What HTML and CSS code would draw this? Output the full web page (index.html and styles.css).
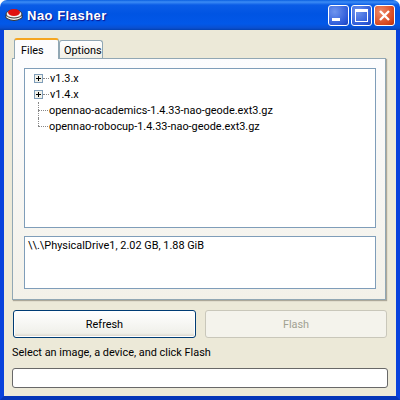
FILE: index.html
```html
<!DOCTYPE html>
<html>
<head>
  <title>Nao Flasher</title>
  <link rel="stylesheet" href="styles.css">
</head>
<body>
  <div class="window">
    <div class="titlebar">
      <svg class="appIcon" width="18" height="16" viewBox="0 0 18 16">
        <path d="M1 8 L1 11 Q9 16 17 11 L17 8 Z" fill="#f4f4f4" stroke="#333" stroke-width="1"/>
        <ellipse cx="9" cy="7" rx="8" ry="4" fill="#f4f4f4" stroke="#333" stroke-width="1"/>
        <ellipse cx="9" cy="5.5" rx="6" ry="3.5" fill="#e01010"/>
      </svg>
      <span class="title">Nao Flasher</span>
      <div class="winButtons">
        <div class="winBtn"><span class="minGlyph"></span></div>
        <div class="winBtn"><span class="maxGlyph"></span></div>
        <div class="winBtn closeBtn">
          <svg width="13" height="13" viewBox="0 0 13 13"><path d="M2 2 L11 11 M11 2 L2 11" stroke="#fff" stroke-width="2.4"/></svg>
        </div>
      </div>
    </div>
    <div class="content">
      <div class="tabs">
        <div class="tab activeTab">Files</div>
        <div class="tab">Options</div>
      </div>
      <div class="panel">
        <div class="tree">
          <div class="row"><span class="expander"></span><span class="dash"></span>v1.3.x</div>
          <div class="row"><span class="expander"></span><span class="dash"></span>v1.4.x</div>
          <div class="row leaf"><span class="dash longDash"></span>opennao-academics-1.4.33-nao-geode.ext3.gz</div>
          <div class="row leaf lastLeaf"><span class="dash longDash"></span>opennao-robocup-1.4.33-nao-geode.ext3.gz</div>
        </div>
        <div class="devices">\\.\PhysicalDrive1, 2.02 GB, 1.88 GiB</div>
      </div>
      <div class="actions">
        <button class="btn refresh">Refresh</button>
        <button class="btn" disabled>Flash</button>
      </div>
      <p class="status">Select an image, a device, and click Flash</p>
      <div class="progress"></div>
    </div>
  </div>
</body>
</html>
```
FILE: styles.css
```css
*{
  box-sizing: border-box;
  padding: 0;
  margin: 0;
}

body{
  width: 400px;
  height: 400px;
  overflow: hidden;
  font-family: Roboto, "Liberation Sans", Arial, sans-serif;
  font-size: 10.9px;
  color: #000;
}

.window{
  width: 400px;
  height: 400px;
  display: flex;
  flex-direction: column;
  border-radius: 7px 7px 0 0;
  background-color: #fff;
}

.titlebar{
  height: 30px;
  display: flex;
  align-items: center;
  padding: 0 5px 0 5px;
  border-radius: 7px 7px 0 0;
  background: linear-gradient(to bottom, #0a5fe0 0, #3c8cf5 2px, #0a5ce6 5px, #0054e3 14px, #0258e8 24px, #0a4fd0 28px, #0340b0 30px);
}

.appIcon{
  margin-right: 4px;
}

.title{
  color: #fff;
  font-family: "Liberation Sans", Arial, sans-serif;
  font-size: 13px;
  font-weight: bold;
  letter-spacing: .5px;
  text-shadow: 1px 1px 1px #0f1089;
}

.winButtons{
  margin-left: auto;
  display: flex;
  gap: 2px;
}

.winBtn{
  width: 21px;
  height: 21px;
  border: 1px solid #fff;
  border-radius: 3px;
  background: radial-gradient(circle at 30% 30%, #6f95ee, #2a58d8 75%, #1d3fb5);
  display: flex;
  align-items: center;
  justify-content: center;
}

.closeBtn{
  background: radial-gradient(circle at 30% 30%, #ef8a6a, #d9481f 70%, #b5300f);
}

.minGlyph{
  width: 8px;
  height: 3px;
  background: #fff;
  margin: 9px 5px 0 0;
}

.maxGlyph{
  width: 13px;
  height: 13px;
  border: 1px solid #fff;
  border-top-width: 3px;
}

.content{
  flex: 1;
  display: flex;
  flex-direction: column;
  background: #ece9d8;
  border-left: 4px solid #0842dc;
  border-right: 4px solid #0842dc;
  border-bottom: 4px solid #0535b8;
  padding: 8px 8px 0 8px;
}

.tabs{
  height: 20px;
  display: flex;
  align-items: flex-end;
  padding-left: 2px;
}

.tab{
  width: 44px;
  height: 18px;
  padding: 3px 0 0 4px;
  background: linear-gradient(to bottom, #fff, #f0efe6);
  border: 1px solid #91a7b4;
  border-bottom: none;
  border-radius: 3px 3px 0 0;
}

.activeTab{
  position: relative;
  height: 21px;
  width: 45px;
  padding: 4px 0 0 6px;
  margin-bottom: -1px;
  background: #fcfcfe;
  border-top: 2px solid #f5a623;
}

.panel{
  height: 242px;
  width: 374px;
  padding: 9px 10px 0 11px;
  background: linear-gradient(to bottom, #fcfcfe, #f3f1e9);
  border: 1px solid #91a7b4;
  box-shadow: 1px 1px 1px #aca899;
}

.tree{
  height: 160px;
  width: 352px;
  padding: 1px 0 0 8px;
  background: #fff;
  border: 1px solid #7f9db9;
}

.row{
  height: 16px;
  display: flex;
  align-items: center;
  white-space: nowrap;
  position: relative;
}

.expander{
  width: 9px;
  height: 9px;
  margin-left: 1px;
  border: 1px solid #7f9db9;
  background:
    linear-gradient(#000, #000) center / 5px 1px no-repeat,
    linear-gradient(#000, #000) center / 1px 5px no-repeat,
    #f2f2ea;
}

.dash{
  width: 6px;
  margin: 0 1px 0 0;
  border-top: 1px dotted #888;
}

.longDash{
  width: 10px;
  margin-left: 5px;
  margin-right: 1px;
}

.leaf::before{
  content: "";
  position: absolute;
  left: 5px;
  top: 0;
  height: 16px;
  border-left: 1px dotted #888;
}

.lastLeaf::before{
  height: 8px;
}

.devices{
  height: 53px;
  width: 352px;
  margin-top: 8px;
  padding: 2px 0 0 3px;
  background: #fff;
  border: 1px solid #7f9db9;
}

.actions{
  display: flex;
  gap: 9px;
  margin-top: 10px;
  padding-left: 1px;
}

.btn{
  width: 183px;
  height: 28px;
  font-family: inherit;
  font-size: 10.9px;
  border-radius: 3px;
  border: 1px solid #003c74;
  background: linear-gradient(to bottom, #fff, #f0f0ea 85%, #d6d0c5);
  color: #000;
}

.refresh{
  box-shadow: inset 0 0 0 1px #fff;
}

.btn:disabled{
  width: 182px;
  border-color: #c9c7ba;
  background: #f4f3ec;
  color: #a1a192;
}

.status{
  margin-top: 8px;
  height: 14px;
  line-height: 14px;
}

.progress{
  margin-top: 8px;
  height: 20px;
  width: 376px;
  background: #fff;
  border: 1px solid #686868;
  border-radius: 3px;
}
```
